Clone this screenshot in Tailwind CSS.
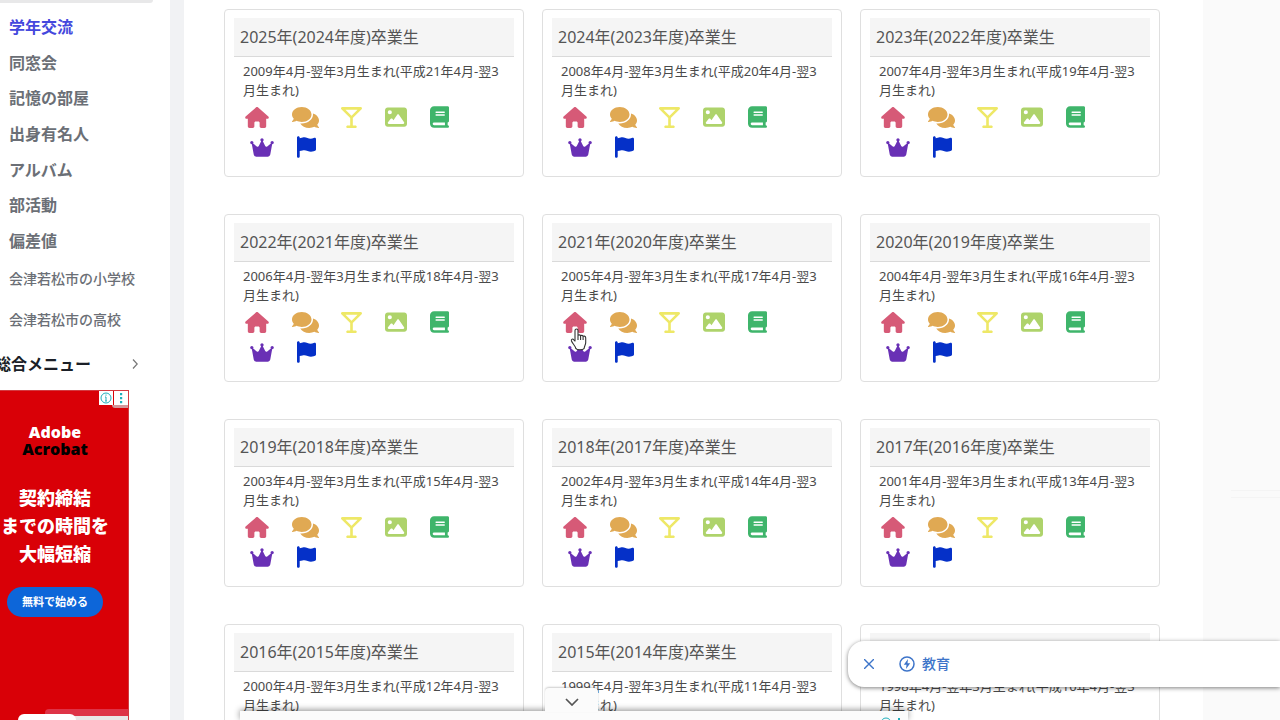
<!DOCTYPE html>
<html lang="ja">
<head>
<meta charset="utf-8">
<meta name="viewport" content="width=device-width, initial-scale=1">
<title>学年交流</title>
<script src="https://cdn.jsdelivr.net/npm/@tailwindcss/browser@4"></script>
</head>
<body class="relative h-screen overflow-hidden bg-[#fafafa] font-['Noto_Sans','Noto_Sans_CJK_JP',sans-serif] text-[#444444]">
<svg class="hidden" aria-hidden="true">
  <symbol id="house" viewBox="0 0 576 512"><path d="M575.8 255.5c0 18-15 32.1-32 32.1h-32l.7 160.2c0 2.7-.2 5.4-.5 8.1V472c0 22.1-17.9 40-40 40H456c-1.1 0-2.2 0-3.3-.1c-1.4 .1-2.8 .1-4.2 .1H416 392c-22.1 0-40-17.9-40-40V448 384c0-17.7-14.3-32-32-32H256c-17.7 0-32 14.3-32 32v64 24c0 22.1-17.9 40-40 40H160 128.1c-1.5 0-3-.1-4.5-.2c-1.2 .1-2.4 .2-3.6 .2H104c-22.1 0-40-17.9-40-40V360c0-.9 0-1.9 .1-2.8V287.6H32c-18 0-32-14-32-32.1c0-9 3-17 10-24L266.4 8c7-7 15-8 22-8s15 2 21 7L564.8 231.5c8 7 12 15 11 24z"/></symbol>
  <symbol id="comments" viewBox="0 32 576 448"><path d="M416 192c0-88.4-93.1-160-208-160S0 103.6 0 192c0 34.3 14.1 65.900 38 92-13.4 30.2-35.5 54.2-35.8 54.5-2.2 2.3-2.8 5.7-1.5 8.7S4.8 352 8 352c36.6 0 66.9-12.3 88.7-25 32.2 15.7 70.3 25 111.3 25 114.9 0 208-71.6 208-160zm122 220c23.9-26 38-57.7 38-92 0-66.9-53.5-124.2-129.3-148.1.9 6.6 1.3 13.3 1.3 20.1 0 105.9-107.7 192-240 192-10.8 0-21.3-.8-31.7-1.9C207.8 439.6 281.8 480 368 480c41 0 79.1-9.2 111.3-25 21.8 12.7 52.1 25 88.7 25 3.2 0 6.1-1.9 7.3-4.8 1.3-2.9.7-6.3-1.5-8.7-.3-.2-22.4-24.2-35.8-54.5z"/></symbol>
  <symbol id="glass" viewBox="0 0 512 512"><path d="M32 0C19.1 0 7.4 7.8 2.4 19.8s-2.2 25.7 6.9 34.9L224 269.3V448H160c-17.7 0-32 14.3-32 32s14.3 32 32 32H352c17.7 0 32-14.3 32-32s-14.3-32-32-32H288V269.3L502.6 54.6c9.2-9.2 11.9-22.9 6.9-34.9S492.9 0 480 0H32zM256 210.7L109.3 64H402.7L256 210.7z"/></symbol>
  <symbol id="image" viewBox="0 0 512 512"><path d="M0 96C0 60.7 28.7 32 64 32H448c35.3 0 64 28.7 64 64V416c0 35.3-28.7 64-64 64H64c-35.3 0-64-28.7-64-64V96zM323.8 202.5c-4.5-6.6-11.9-10.5-19.8-10.5s-15.4 3.9-19.8 10.5l-87 127.6L170.7 297c-4.6-5.7-11.5-9-18.7-9s-14.2 3.3-18.7 9l-64 80c-5.8 7.2-6.9 17.1-2.9 25.4s12.4 13.6 21.6 13.6h96 32H424c8.9 0 17.1-4.9 21.2-12.8s3.6-17.4-1.4-24.7l-120-176zM112 192a48 48 0 1 0 0-96 48 48 0 1 0 0 96z"/></symbol>
  <symbol id="book" viewBox="0 0 448 512"><path d="M96 0C43 0 0 43 0 96V416c0 53 43 96 96 96H384h32c17.7 0 32-14.3 32-32s-14.3-32-32-32V384c17.7 0 32-14.3 32-32V32c0-17.7-14.3-32-32-32H384 96zm0 384H352v64H96c-17.7 0-32-14.3-32-32s14.3-32 32-32zm32-240c0-8.8 7.2-16 16-16H336c8.8 0 16 7.2 16 16s-7.2 16-16 16H144c-8.8 0-16-7.2-16-16zm16 48H336c8.8 0 16 7.2 16 16s-7.2 16-16 16H144c-8.8 0-16-7.2-16-16s7.2-16 16-16z"/></symbol>
  <symbol id="crown" viewBox="0 0 576 512"><path d="M309 106c11.4-7 19-19.7 19-34c0-22.1-17.9-40-40-40s-40 17.9-40 40c0 14.4 7.6 27 19 34L209.7 220.6c-9.1 18.2-32.7 23.4-48.6 10.7L72 160c5-6.7 8-15 8-24c0-22.1-17.9-40-40-40S0 113.9 0 136s17.9 40 40 40c.2 0 .5 0 .7 0L86.4 427.4c5.5 30.4 32 52.6 63 52.6H426.6c30.9 0 57.4-22.1 63-52.6L535.3 176c.2 0 .5 0 .7 0c22.1 0 40-17.9 40-40s-17.9-40-40-40s-40 17.9-40 40c0 9 3 17.3 8 24l-89.1 71.3c-15.9 12.7-39.5 7.5-48.6-10.7L309 106z"/></symbol>
  <symbol id="flag" viewBox="0 0 448 512"><path d="M64 32C64 14.3 49.7 0 32 0S0 14.3 0 32V64 368 480c0 17.7 14.3 32 32 32s32-14.3 32-32V352l64.3-16.1c41.1-10.3 84.6-5.5 122.5 13.4c44.2 22.1 95.5 24.8 141.7 7.4l34.7-13c12.5-4.7 20.8-16.6 20.8-30V66.1c0-23-24.2-38-44.8-27.7l-9.6 4.8c-46.3 23.2-100.8 23.2-147.1 0c-35.1-17.6-75.4-22-113.5-12.5L64 48V32z"/></symbol>
</svg>

<div class="flex h-full overflow-hidden">
  <aside class="flex w-[184px] shrink-0 flex-col border-r-[14px] border-[#f1f2f4] bg-white">
    <div class="h-[3px] w-[153px] shrink-0 rounded-br-lg bg-[#e8e8e9]"></div>
    <nav class="flex shrink-0 flex-col font-medium text-[#6b6f76]">
      <div class="mt-3.5 flex h-[234px] flex-col justify-between pl-[9px] text-base/5 font-bold">
        <a href="#" class="text-[#4448dd]">学年交流</a>
        <a href="#">同窓会</a>
        <a href="#">記憶の部屋</a>
        <a href="#">出身有名人</a>
        <a href="#">アルバム</a>
        <a href="#">部活動</a>
        <a href="#">偏差値</a>
      </div>
      <div class="mt-[18px] flex flex-col gap-[21px] pl-[9px] text-sm/5">
        <a href="#">会津若松市の小学校</a>
        <a href="#">会津若松市の高校</a>
      </div>
      <button class="mt-[22px] -ml-[5px] flex h-6 items-center justify-between pr-8 text-base font-bold text-[#1b1f27]">
        総合メニュー
        <svg class="h-2.5 w-1.5" viewBox="0 0 6 10" fill="none" stroke="#777" stroke-width="1.2"><path d="M1 .5 5.200 5 1 9.500"/></svg>
      </button>
    </nav>
    <section class="relative mt-3.5 flex w-[129px] flex-1 flex-col items-center overflow-hidden border border-b-0 border-l-0 border-[#d33a40] bg-[#d90007] pr-[18px] text-white" aria-label="広告">
      <div class="absolute top-0 right-0 flex h-3.5 gap-px">
        <svg class="h-3.5 w-3.5 bg-white" viewBox="0 0 14 14" fill="none" stroke="#20aebb"><circle cx="7" cy="7" r="5"/><path d="M7 6v4M7 3.500v1.200M6 10h2M6 6h1"/></svg>
        <svg class="h-3.5 w-3.5 bg-white" viewBox="0 0 14 14" fill="#20aebb"><path d="M6 2h2.200v2.200H6zM6 6h2.200v2.200H6zM6 10h2.200v2.200H6z"/></svg>
      </div>
      <div class="absolute top-3.5 right-0 h-[3px] w-4 rounded-bl bg-[#d4979b]"></div>
      <div class="mt-[33px] text-center font-['Open_Sans',sans-serif] text-base/[17px] font-extrabold">Adobe<br><span class="text-black">Acrobat</span></div>
      <p class="mt-[26px] text-center text-lg/[28px] font-extrabold whitespace-nowrap">契約締結<br>までの時間を<br>大幅短縮</p>
      <button class="mt-[19px] h-[30px] w-24 rounded-full bg-[#0d66d9] text-[11px] font-bold">無料で始める</button>
      <div class="absolute right-0 bottom-0 h-[11px] w-[83px] rounded-tl bg-[#de3347]"></div>
      <div class="absolute right-0 bottom-0 h-1 w-[83px] bg-[#e9e6e7]"></div>
      <div class="absolute bottom-0 left-[18px] h-[6px] w-[58px] rounded-t-lg bg-white"></div>
    </section>
  </aside>
  <main class="flex-1 bg-white pt-[9px] pr-[43px] pl-10">
    <div id="cards" class="grid grid-cols-3 gap-x-[18px] gap-y-[37px]"></div>
  </main>
  <aside class="w-[77px] shrink-0 pt-[490px] pl-7">
    <div class="h-2 border-y border-[#f4f4f4]"></div>
  </aside>
</div>

<template id="card">
  <article class="h-[168px] rounded border border-[#dfdfdf] bg-white px-[9px] pt-2">
    <h2 class="flex h-[39px] items-center border-b border-[#dadada] bg-[#f5f5f5] pb-px pl-1.5 text-base whitespace-nowrap text-[#555555]"></h2>
    <p class="mt-[5px] pr-3 pl-[9px] text-[13px]/[19px] text-[#4a4a4a]"></p>
    <div class="mt-1.5 flex h-[22px] items-center pl-[11px]">
      <a href="#" aria-label="ホーム"><svg class="h-[21px] w-6 fill-[#d65a77]"><use href="#house"/></svg></a>
      <a href="#" aria-label="チャット" class="ml-[23px]"><svg class="h-[21px] w-[27px] fill-[#e0a953]"><use href="#comments"/></svg></a>
      <a href="#" aria-label="同窓会" class="ml-[22px]"><svg class="h-[21px] w-[21px] fill-[#eee867]"><use href="#glass"/></svg></a>
      <a href="#" aria-label="アルバム" class="ml-[23px]"><svg class="h-[22px] w-[22px] fill-[#aed36b]"><use href="#image"/></svg></a>
      <a href="#" aria-label="日記" class="ml-[23px]"><svg class="h-[22px] w-[19px] fill-[#3fb56b]"><use href="#book"/></svg></a>
    </div>
    <div class="mt-2 flex h-[22px] items-center gap-[23px] pl-4">
      <a href="#" aria-label="有名人"><svg class="h-[21px] w-6 fill-[#6930b5]"><use href="#crown"/></svg></a>
      <a href="#" aria-label="部活動"><svg class="h-[22px] w-[19px] fill-[#0530c8]"><use href="#flag"/></svg></a>
    </div>
  </article>
</template>

<svg class="absolute top-[328px] left-[570px] h-[23px] w-[17px]" viewBox="0 0 17 23" fill="#fff" stroke="#333" stroke-width="1.100" stroke-linejoin="round" aria-hidden="true"><path d="M5 13V2.500c0-2 3-2 3 0V8c0-1.500 2.600-1.500 2.600.3 0-1.400 2.500-1.300 2.500.5 0-1.200 2.600-1 2.600 1v5c0 2-1.500 3.500-1.500 5.500-1 2-7.500 2-8.500 0C5.500 18 2.500 15.500 1.500 13c-.7-2 1.300-2.500 2.300-1.200zM8 8v4M10.600 8.500V12M13.100 9v3" /></svg>

<div class="absolute bottom-0 left-60 h-[9px] w-[668px] bg-[#fbfbfb] shadow-[0_-1px_6px_rgba(0,0,0,0.45)]">
  <div class="absolute right-1 bottom-0 h-[3px] w-6 overflow-hidden">
    <svg class="h-3 w-6" viewBox="0 0 24 12" fill="none" stroke="#20aebb"><circle cx="6" cy="6" r="5"/><path d="M19 1v10" stroke-width="2" stroke-dasharray="2 2"/></svg>
  </div>
</div>
<button aria-label="閉じる" class="absolute bottom-2 left-[545px] flex h-6 w-[53px] items-center justify-center rounded-t bg-[#fbfbfb] pt-1 shadow-[0_-1px_2px_rgba(0,0,0,0.2)]">
  <svg class="h-2 w-3.5" viewBox="0 0 14 8" fill="none" stroke="#555" stroke-width="1.700"><path d="m1 1 6 6 6-6"/></svg>
</button>

<div class="absolute right-0 bottom-[33px] left-[848px] flex h-[46px] items-center rounded-l-2xl bg-white pl-4 text-[#3d74c9] shadow-[0_1px_4px_rgba(0,0,0,0.5)]">
  <button aria-label="広告を閉じる"><svg class="h-2.5 w-2.5" viewBox="0 0 10 10" fill="none" stroke="currentColor" stroke-width="1.400"><path d="m0 0 10 10M10 0 0 10"/></svg></button>
  <a href="#" class="ml-[25px] flex items-center gap-[7px] text-sm font-medium">
    <svg class="h-4 w-4" viewBox="0 0 16 16"><circle cx="8" cy="8" r="7" fill="none" stroke="currentColor" stroke-width="1.500"/><path fill="currentColor" d="M9 3 4.800 8.800h2.700L7 13l4.200-5.800H8.500z"/></svg>
    教育
  </a>
</div>

<script>
  const cards = document.getElementById('cards');
  const template = document.getElementById('card');
  for (let year = 2025; year >= 2014; year--) {
    const card = template.content.cloneNode(true);
    card.querySelector('h2').textContent = `${year}年(${year - 1}年度)卒業生`;
    card.querySelector('p').textContent = `${year - 16}年4月-翌年3月生まれ(平成${year - 2004}年4月-翌3月生まれ)`;
    cards.appendChild(card);
  }
</script>
</body>
</html>
